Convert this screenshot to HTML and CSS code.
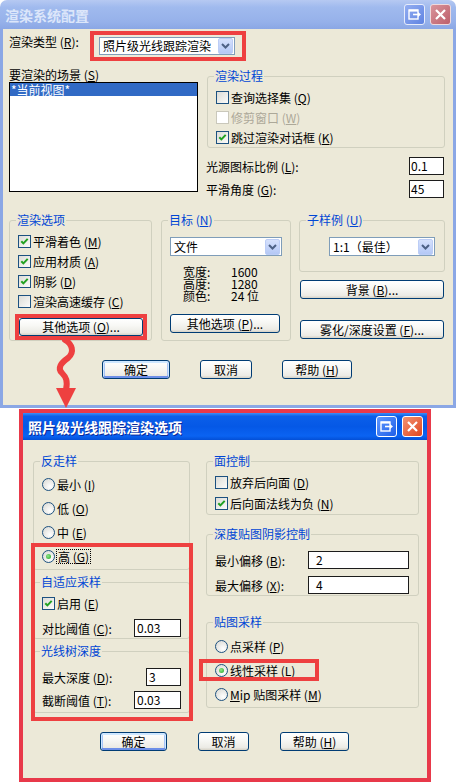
FILE: index.html
```html
<!DOCTYPE html>
<html lang="zh-CN">
<head>
    <meta charset="UTF-8">
    <meta name="viewport" content="width=device-width, initial-scale=1.0">
    <title>渲染系统配置</title>
    <link rel="stylesheet" href="styles.css">
</head>
<body>
<div class="page">
    <!-- main dialog (inactive) -->
    <div class="win win1">
        <div class="titlebar">
            <span class="title">渲染系统配置</span>
            <span class="tbtn help">
                <svg width="17" height="17" viewBox="0 0 17 17"><rect x="3" y="4" width="9" height="9" fill="none" stroke="#fff" stroke-width="1.4"/><line x1="3" y1="4.6" x2="12" y2="4.6" stroke="#fff" stroke-width="2"/><line x1="7" y1="8.5" x2="13" y2="8.5" stroke="#fff" stroke-width="1.6"/><polygon points="12,6 15,8.5 12,11" fill="#fff"/></svg>
            </span>
            <span class="tbtn close">
                <svg width="17" height="17" viewBox="0 0 17 17"><path d="M4 4 L13 13 M13 4 L4 13" stroke="#fff" stroke-width="2.2"/></svg>
            </span>
        </div>
        <div class="client">
            <div class="row-type">
                <span class="lbl-type">渲染类型 (<u>R</u>):</span>
                <div class="mark mark-type">
                    <div class="combo combo-type">
                        <span class="combo-text">照片级光线跟踪渲染</span>
                        <span class="drop"><svg width="9" height="6" viewBox="0 0 9 6"><polyline points="1,1 4.5,4.5 8,1" fill="none" stroke="#4d6185" stroke-width="2"/></svg></span>
                    </div>
                </div>
            </div>

            <div class="row-scene">
                <div class="scene-col">
                    <div class="lbl">要渲染的场景 (<u>S</u>)</div>
                    <div class="listbox">
                        <div class="item sel">*当前视图*</div>
                    </div>
                </div>
                <div class="proc-col">
                    <fieldset class="grp grp-proc">
                        <legend>渲染过程</legend>
                        <div class="chkrow"><span class="chk"></span>查询选择集 (<u>Q</u>)</div>
                        <div class="chkrow disabled"><span class="chk"></span>修剪窗口 (<u>W</u>)</div>
                        <div class="chkrow"><span class="chk"><svg width="11" height="11" viewBox="0 0 11 11"><path d="M2.3 5.2 L4.4 7.4 L8.7 2.9" fill="none" stroke="#21a121" stroke-width="2"/></svg></span>跳过渲染对话框 (<u>K</u>)</div>
                    </fieldset>
                    <div class="field-row first"><span>光源图标比例 (<u>L</u>):</span><span class="edit e-small">0.1</span></div>
                    <div class="field-row"><span>平滑角度 (<u>G</u>):</span><span class="edit e-small">45</span></div>
                </div>
            </div>

            <div class="row-grp">
                <fieldset class="grp grp-opt">
                    <legend>渲染选项</legend>
                    <div class="chkrow"><span class="chk"><svg width="11" height="11" viewBox="0 0 11 11"><path d="M2.3 5.2 L4.4 7.4 L8.7 2.9" fill="none" stroke="#21a121" stroke-width="2"/></svg></span>平滑着色 (<u>M</u>)</div>
                    <div class="chkrow"><span class="chk"><svg width="11" height="11" viewBox="0 0 11 11"><path d="M2.3 5.2 L4.4 7.4 L8.7 2.9" fill="none" stroke="#21a121" stroke-width="2"/></svg></span>应用材质 (<u>A</u>)</div>
                    <div class="chkrow"><span class="chk"><svg width="11" height="11" viewBox="0 0 11 11"><path d="M2.3 5.2 L4.4 7.4 L8.7 2.9" fill="none" stroke="#21a121" stroke-width="2"/></svg></span>阴影 (<u>D</u>)</div>
                    <div class="chkrow"><span class="chk"></span>渲染高速缓存 (<u>C</u>)</div>
                    <div class="mark mark-opt">
                        <div class="btn btn-opt">其他选项 (<u>O</u>)...</div>
                    </div>
                </fieldset>

                <fieldset class="grp grp-target">
                    <legend>目标 (<u>N</u>)</legend>
                    <div class="combo combo-file">
                        <span class="combo-text">文件</span>
                        <span class="drop"><svg width="9" height="6" viewBox="0 0 9 6"><polyline points="1,1 4.5,4.5 8,1" fill="none" stroke="#4d6185" stroke-width="2"/></svg></span>
                    </div>
                    <div class="info">
                        <div><span class="ik">宽度:</span>1600</div>
                        <div><span class="ik">高度:</span>1280</div>
                        <div><span class="ik">颜色:</span>24 位</div>
                    </div>
                    <div class="btn btn-target">其他选项 (<u>P</u>)...</div>
                </fieldset>

                <div class="sub-col">
                    <fieldset class="grp grp-sub">
                        <legend>子样例 (<u>U</u>)</legend>
                        <div class="combo combo-sub">
                            <span class="combo-text">1:1（最佳）</span>
                            <span class="drop"><svg width="9" height="6" viewBox="0 0 9 6"><polyline points="1,1 4.5,4.5 8,1" fill="none" stroke="#4d6185" stroke-width="2"/></svg></span>
                        </div>
                    </fieldset>
                    <div class="btn btn-wide btn-bg">背景 (<u>B</u>)...</div>
                    <div class="btn btn-wide btn-fog">雾化/深度设置 (<u>F</u>)...</div>
                </div>
            </div>

            <div class="row-btns">
                <div class="btn def b-ok">确定</div>
                <div class="btn b-cancel">取消</div>
                <div class="btn b-help">帮助 (<u>H</u>)</div>
            </div>
        </div>
    </div>

    <!-- options dialog, framed in red -->
    <div class="frame2">
        <div class="win win2">
            <div class="titlebar">
                <span class="title">照片级光线跟踪渲染选项</span>
                <span class="tbtn help">
                    <svg width="17" height="17" viewBox="0 0 17 17"><rect x="3" y="4" width="9" height="9" fill="none" stroke="#fff" stroke-width="1.4"/><line x1="3" y1="4.6" x2="12" y2="4.6" stroke="#fff" stroke-width="2"/><line x1="7" y1="8.5" x2="13" y2="8.5" stroke="#fff" stroke-width="1.6"/><polygon points="12,6 15,8.5 12,11" fill="#fff"/></svg>
                </span>
                <span class="tbtn close">
                    <svg width="17" height="17" viewBox="0 0 17 17"><path d="M4 4 L13 13 M13 4 L4 13" stroke="#fff" stroke-width="2.2"/></svg>
                </span>
            </div>
            <div class="client">
                <div class="cols2">
                    <div class="col-left">
                        <fieldset class="grp grp-aa">
                            <legend>反走样</legend>
                            <div class="radrow"><span class="rad"></span>最小 (<u>I</u>)</div>
                            <div class="radrow"><span class="rad"></span>低 (<u>O</u>)</div>
                            <div class="radrow"><span class="rad"></span>中 (<u>E</u>)</div>
                            <div class="radrow"><span class="rad on"></span><span class="focus">高 (<u>G</u>)</span></div>
                        </fieldset>
                        <fieldset class="grp grp-adapt">
                            <legend>自适应采样</legend>
                            <div class="chkrow"><span class="chk"><svg width="11" height="11" viewBox="0 0 11 11"><path d="M2.3 5.2 L4.4 7.4 L8.7 2.9" fill="none" stroke="#21a121" stroke-width="2"/></svg></span>启用 (<u>E</u>)</div>
                            <div class="field-row adapt-row"><span>对比阈值 (<u>C</u>):</span><span class="edit e-mid">0.03</span></div>
                        </fieldset>
                        <fieldset class="grp grp-ray">
                            <legend>光线树深度</legend>
                            <div class="field-row ray-first"><span>最大深度 (<u>D</u>):</span><span class="edit e-tiny">3</span></div>
                            <div class="field-row"><span>截断阈值 (<u>T</u>):</span><span class="edit e-mid">0.03</span></div>
                        </fieldset>
                    </div>
                    <div class="col-right">
                        <fieldset class="grp grp-face">
                            <legend>面控制</legend>
                            <div class="chkrow tall"><span class="chk"></span>放弃后向面 (<u>D</u>)</div>
                            <div class="chkrow tall"><span class="chk"><svg width="11" height="11" viewBox="0 0 11 11"><path d="M2.3 5.2 L4.4 7.4 L8.7 2.9" fill="none" stroke="#21a121" stroke-width="2"/></svg></span>后向面法线为负 (<u>N</u>)</div>
                        </fieldset>
                        <fieldset class="grp grp-depth">
                            <legend>深度贴图阴影控制</legend>
                            <div class="field-row depth-first"><span>最小偏移 (<u>B</u>):</span><span class="edit e-wide">2</span></div>
                            <div class="field-row depth-second"><span>最大偏移 (<u>X</u>):</span><span class="edit e-wide">4</span></div>
                        </fieldset>
                        <fieldset class="grp grp-tex">
                            <legend>贴图采样</legend>
                            <div class="radrow"><span class="rad"></span>点采样 (<u>P</u>)</div>
                            <div class="radrow"><span class="rad on"></span>线性采样 (<u>L</u>)</div>
                            <div class="radrow"><span class="rad"></span><u>M</u>ip 贴图采样 (<u>M</u>)</div>
                        </fieldset>
                    </div>
                </div>

                <div class="row-btns row-btns2">
                    <div class="btn def b-ok2">确定</div>
                    <div class="btn b-cancel2">取消</div>
                    <div class="btn b-help2">帮助 (<u>H</u>)</div>
                </div>

                <div class="ann ann-aa"></div>
                <div class="ann ann-lin"></div>
            </div>
        </div>
    </div>

    <svg class="arrow" width="456" height="420" viewBox="0 0 456 420">
        <path d="M65 340 C72 344, 75 352, 68 358 C61 363, 57 368, 62 373 C66 377, 68 381, 66 390" fill="none" stroke="#ee4040" stroke-width="6" stroke-linecap="round"/>
        <polygon points="56,388 76,388 66,408" fill="#ee4040"/>
    </svg>
</div>
</body>
</html>
```

FILE: styles.css
```css
* {
    box-sizing: border-box;
}
body {
    margin: 0;
    background: #fff;
    font-family: "Noto Sans CJK SC", "Liberation Sans", sans-serif;
    font-size: 12px;
    color: #000;
}
u {
    text-decoration: underline;
    text-underline-offset: 1px;
}
.page {
    position: relative;
    width: 456px;
    height: 782px;
    overflow: hidden;
}

/* window chrome */
.win {
    display: flex;
    flex-direction: column;
}
.win1 {
    width: 456px;
    height: 408px;
}
.titlebar {
    display: flex;
    align-items: center;
    flex-shrink: 0;
}
.title {
    flex: 1;
    font-size: 14px;
    font-weight: bold;
    line-height: 16px;
}
.win1 .titlebar {
    height: 29px;
    padding: 0 5px;
    border-radius: 7px 7px 0 0;
    background: linear-gradient(#b6c9f2, #a0baee 25%, #96b1ea 75%, #8ba7e5);
}
.win1 .title {
    color: #dce6fa;
}
.tbtn {
    width: 21px;
    height: 21px;
    margin-left: 5px;
    border: 1px solid #fff;
    border-radius: 3px;
    display: flex;
    align-items: center;
    justify-content: center;
}
.win1 .tbtn.help {
    border-color: #e6ecfb;
    background: linear-gradient(135deg, #93aef1, #5f83e2);
}
.win1 .tbtn.close {
    border-color: #eed9dc;
    background: linear-gradient(135deg, #d9949b, #bd5f6b);
}
.client {
    flex: 1;
    background: #ece9d8;
}
.win1 .client {
    border: 3px solid #8ba7e5;
    border-top: 0;
    padding: 2px 8px 0 6px;
}

.frame2 {
    width: 412px;
    height: 373px;
    margin: 1px 0 0 19px;
    border: 4px solid #e8394a;
    display: flex;
    flex-direction: column;
}
.win2 {
    flex: 1;
}
.win2 .titlebar {
    height: 27px;
    padding: 0 4px 0 5px;
    background: linear-gradient(#3d8ef7, #0b5fe9 12%, #0558e6 50%, #0a63f2 85%, #034fd6);
}
.win2 .title {
    color: #fff;
    text-shadow: 1px 1px #0a2a9a;
}
.win2 .tbtn.help {
    background: linear-gradient(135deg, #5f98ff, #1f5fe8);
}
.win2 .tbtn.close {
    background: linear-gradient(135deg, #f29272, #e0461f);
}
.win2 .client {
    position: relative;
    padding: 14px 8px 0 10px;
}

/* controls */
.grp {
    margin: 0;
    padding: 4px 8px 0 8px;
    min-width: 0;
    border: 1px solid #d0d0bf;
    border-radius: 3px;
}
.grp legend {
    padding: 0 1px;
    margin-left: -2px;
    color: #0046d5;
    line-height: 14px;
}
.chkrow {
    display: flex;
    align-items: center;
    height: 20px;
}
.chkrow.tall {
    height: 21px;
}
.chk {
    width: 13px;
    height: 13px;
    margin-right: 2px;
    flex-shrink: 0;
    border: 1px solid #1c5180;
    background: linear-gradient(135deg, #dcdcd7, #fbfbf9);
    display: flex;
    align-items: center;
    justify-content: center;
}
.disabled {
    color: #aca899;
}
.disabled .chk {
    border-color: #cac8bb;
    background: #fff;
}
.radrow {
    display: flex;
    align-items: center;
    height: 24px;
}
.rad {
    width: 13px;
    height: 13px;
    margin-right: 2px;
    flex-shrink: 0;
    border: 1px solid #1c5180;
    border-radius: 50%;
    background: radial-gradient(circle at 65% 70%, #fff, #d6d6d0);
    display: flex;
    align-items: center;
    justify-content: center;
}
.rad.on::after {
    content: "";
    width: 5px;
    height: 5px;
    border-radius: 50%;
    background: radial-gradient(circle at 40% 40%, #8ee88a, #21a121);
}
.focus {
    outline: 1px dotted #000;
    padding: 0 1px;
    line-height: 13px;
}
.edit {
    height: 18px;
    padding-left: 1px;
    border: 1px solid #1c1c1c;
    background: #fff;
    line-height: 16px;
}
.e-small { width: 35px; }
.e-mid { width: 47px; padding-left: 2px; }
.e-tiny { width: 35px; padding-left: 2px; }
.e-wide { width: 101px; padding-left: 7px; }
.field-row {
    display: flex;
    align-items: center;
    justify-content: space-between;
    height: 18px;
    margin-top: 5px;
}
.combo {
    display: flex;
    align-items: center;
    height: 19px;
    padding: 0 1px 0 3px;
    border: 1px solid #7f9db9;
    background: #fff;
}
.combo-text {
    flex: 1;
    line-height: 16px;
    white-space: nowrap;
}
.drop {
    width: 15px;
    height: 16px;
    border: 1px solid #bccdf6;
    border-radius: 2px;
    background: linear-gradient(#d6e1fc, #b4c8f6);
    display: flex;
    align-items: center;
    justify-content: center;
}
.btn {
    display: flex;
    align-items: center;
    justify-content: center;
    height: 19px;
    border: 1px solid #003c74;
    border-radius: 3px;
    background: linear-gradient(#fff, #f8f8f5 40%, #ecebe5 85%, #d6d2c6);
    line-height: 14px;
    white-space: nowrap;
}
.btn.def {
    box-shadow: inset 0 1px 0 1px #cee7ff, inset 0 -1px 0 1px #6d8fe8, inset 0 0 0 2px #a8c4f6;
}
.mark {
    border: 4px solid #ee4040;
}
.ann {
    position: absolute;
    border: 4px solid #ee4040;
    pointer-events: none;
}

/* main dialog layout */
.row-type {
    display: flex;
    align-items: flex-start;
}
.lbl-type {
    width: 81px;
    margin-top: 4px;
    line-height: 14px;
}
.mark-type {
    width: 156px;
    height: 30px;
    padding: 2px 7px 2px 5px;
}
.combo-type {
    width: 136px;
    height: 18px;
}
.row-scene {
    display: flex;
    gap: 8px;
    margin-top: 7px;
}
.scene-col {
    width: 189px;
}
.lbl {
    line-height: 14px;
}
.listbox {
    height: 110px;
    border: 1px solid #000;
    background: #fff;
}
.item {
    height: 13px;
    padding-left: 1px;
    line-height: 13px;
}
.item.sel {
    background: #316ac5;
    color: #fff;
}
.proc-col {
    width: 239px;
}
.grp-proc {
    width: 238px;
    margin: 1px 0 0 1px;
}
.proc-col .field-row {
    padding-right: 1px;
}
.proc-col .field-row.first {
    margin-top: 9px;
}
.row-grp {
    display: flex;
    align-items: flex-start;
    margin-top: 15px;
}
.grp-opt {
    width: 143px;
}
.mark-opt {
    width: 132px;
    height: 26px;
    margin: 3px 0 0 -3px;
}
.btn-opt {
    width: 124px;
    height: 18px;
}
.grp-target {
    width: 130px;
    margin-left: 9px;
    padding: 10px 8px 7px 8px;
}
.combo-file {
    width: 112px;
}
.info {
    margin: 10px 0 0 13px;
    line-height: 12px;
}
.ik {
    display: inline-block;
    width: 48px;
}
.btn-target {
    width: 110px;
    margin-top: 12px;
}
.sub-col {
    width: 146px;
    margin-left: 8px;
}
.grp-sub {
    width: 146px;
    padding: 10px 8px 15px 8px;
}
.combo-sub {
    width: 106px;
    margin-left: 21px;
}
.btn-wide {
    width: 144px;
    margin-left: 1px;
}
.btn-bg {
    margin-top: 8px;
}
.btn-fog {
    margin-top: 21px;
}
.row-btns {
    display: flex;
    gap: 30px;
    margin: 19px 0 0 93px;
}
.b-ok { width: 68px; }
.b-cancel { width: 52px; }
.b-help { width: 70px; }

/* options dialog layout */
.cols2 {
    display: flex;
    align-items: flex-start;
    gap: 16px;
}
.col-left {
    width: 157px;
}
.col-right {
    width: 213px;
}
.grp-aa {
    padding-bottom: 1px;
}
.grp-adapt {
    margin-top: 5px;
    padding-bottom: 1px;
}
.adapt-row {
    margin-top: 6px;
}
.grp-ray {
    margin-top: 5px;
    padding: 10px 8px 3px 8px;
}
.ray-first {
    margin-top: 0;
}
.grp-depth {
    margin-top: 12px;
    padding: 10px 9px 1px 8px;
}
.depth-first {
    margin-top: 0;
}
.depth-second {
    margin-top: 7px;
}
.grp-tex {
    margin-top: 19px;
    padding: 5px 8px 1px 8px;
}
.row-btns2 {
    gap: 31px;
    margin: 19px 0 0 67px;
}
.b-ok2 { width: 67px; }
.b-cancel2 { width: 51px; }
.b-help2 { width: 69px; }
.ann-aa {
    left: 8px;
    top: 103px;
    width: 162px;
    height: 178px;
}
.ann-lin {
    left: 176px;
    top: 219px;
    width: 120px;
    height: 22px;
}

.arrow {
    position: absolute;
    left: 0;
    top: 0;
    pointer-events: none;
}
```
